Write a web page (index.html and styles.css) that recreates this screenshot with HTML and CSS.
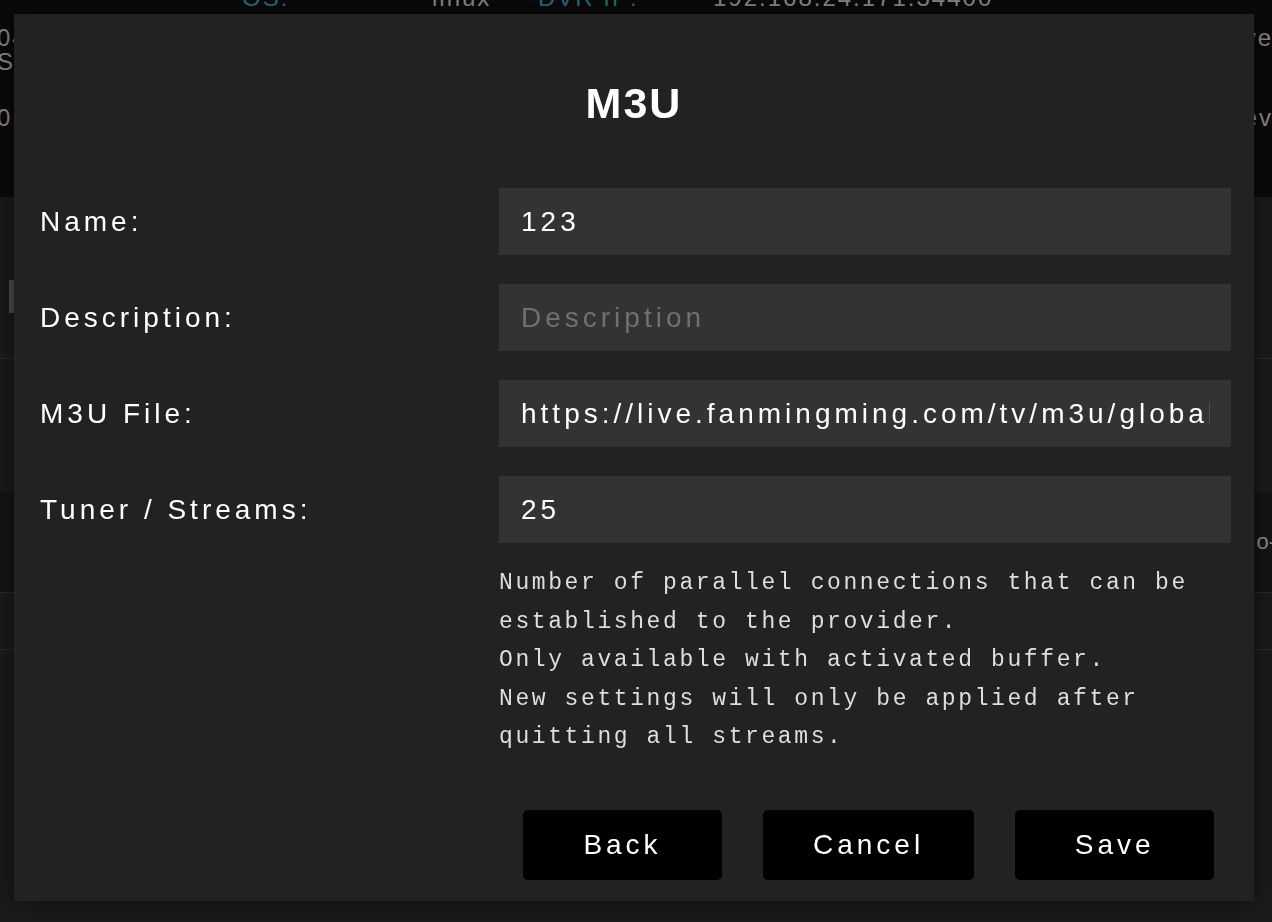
FILE: index.html
```html
<!DOCTYPE html>
<html lang="en">
<head>
<meta charset="utf-8">
<title>M3U</title>
<link rel="stylesheet" href="styles.css">
</head>
<body>
<div class="page">
  <header class="topbar">
    <div class="sysinfo">
      <span class="key">OS:</span>
      <span class="val">linux</span>
      <span class="key">DVR IP:</span>
      <span class="val">192.168.24.171:34400</span>
    </div>
    <div class="edge-row first">
      <div class="edge-left">04 Build<br>Streams</div>
      <div class="edge-right">Active</div>
    </div>
    <div class="edge-row second">
      <div class="edge-left">0 Build</div>
      <div class="edge-right">Lev</div>
    </div>
  </header>
  <section class="list">
    <div class="row row-a"><div class="thumb"></div></div>
    <div class="row row-b"></div>
    <div class="row row-c"><span class="dash">o-</span></div>
    <div class="row row-d"></div>
  </section>
</div>

<div class="modal">
  <h1 class="title">M3U</h1>
  <div class="form">
    <label class="label" for="name">Name:</label>
    <input class="field" id="name" type="text" value="123">
    <label class="label" for="desc">Description:</label>
    <input class="field" id="desc" type="text" placeholder="Description">
    <label class="label" for="file">M3U File:</label>
    <input class="field" id="file" type="text" value="https://live.fanmingming.com/tv/m3u/global.m3u">
    <label class="label" for="tuner">Tuner / Streams:</label>
    <input class="field" id="tuner" type="text" value="25">
  </div>
  <div class="foot">
    <p class="help">Number of parallel connections that can be established to the provider.<br>Only available with activated buffer.<br>New settings will only be applied after quitting all streams.</p>
    <div class="buttons">
      <button class="btn" type="button">Back</button>
      <button class="btn" type="button">Cancel</button>
      <button class="btn" type="button">Save</button>
    </div>
  </div>
</div>
</body>
</html>
```
FILE: styles.css
```css
html, body {
  margin: 0;
  padding: 0;
}
body {
  width: 1272px;
  height: 922px;
  overflow: hidden;
  background: #1b1b1b;
  font-family: "Liberation Sans", Arial, sans-serif;
}

/* background page */
.topbar {
  height: 197px;
  overflow: hidden;
  background: #0a0a0a;
  color: #8c8c8c;
  font-size: 24px;
  letter-spacing: 2px;
  line-height: 24px;
}
.sysinfo {
  display: grid;
  grid-template-columns: 190px 106px 175px auto;
  padding-left: 242px;
  margin-top: -14px;
}
.key {
  color: #2b6d7c;
}
.edge-row {
  display: flex;
  justify-content: space-between;
}
.edge-row.first {
  margin-top: 16px;
}
.edge-row.second {
  margin-top: 32px;
}
.edge-left {
  margin-left: -3px;
}
.edge-right {
  margin-right: -1px;
}

.list .row {
  box-sizing: border-box;
}
.row-a {
  height: 162px;
  padding: 83px 0 0 9px;
  border-bottom: 1px solid #2b2b2b;
}
.thumb {
  width: 5px;
  height: 33px;
  background: #4d4d4d;
}
.row-b {
  height: 133px;
}
.row-c {
  height: 101px;
  background: #151515;
  border-bottom: 1px solid #2b2b2b;
  display: flex;
  justify-content: flex-end;
  align-items: center;
  color: #8c8c8c;
  font-size: 22px;
}
.dash {
  margin-right: -4px;
}
.row-d {
  height: 57px;
  border-bottom: 1px solid #2b2b2b;
}

/* modal */
.modal {
  position: fixed;
  top: 14px;
  left: 14px;
  width: 1240px;
  height: 887px;
  box-sizing: border-box;
  padding: 68px 23px 0 26px;
  background: #222222;
  box-shadow: 0 0 24px rgba(0, 0, 0, 0.55);
  color: #ffffff;
}
.title {
  margin: 0 0 63px;
  text-align: center;
  font-size: 43px;
  line-height: 43px;
  font-weight: bold;
  letter-spacing: 2px;
  padding-right: 3px;
}
.form {
  display: grid;
  grid-template-columns: 459px 732px;
  row-gap: 29px;
  align-items: center;
}
.label {
  font-size: 28px;
  letter-spacing: 4px;
  color: #ffffff;
}
.field {
  box-sizing: border-box;
  width: 732px;
  height: 67px;
  margin: 0;
  padding: 0 21px 0 22px;
  border: none;
  border-radius: 0;
  outline: none;
  background: #333333;
  color: #ffffff;
  font-family: "Liberation Sans", Arial, sans-serif;
  font-size: 28px;
  letter-spacing: 4px;
}
.field::placeholder {
  color: #707070;
  opacity: 1;
}
.foot {
  margin-left: 459px;
  width: 732px;
}
.help {
  margin: 21px 0 0;
  font-family: "Liberation Mono", "Courier New", monospace;
  font-size: 23px;
  letter-spacing: 2.6px;
  line-height: 38.5px;
  color: #dedede;
}
.buttons {
  display: flex;
  gap: 41px;
  margin-top: 53px;
  padding-left: 24px;
}
.btn {
  box-sizing: border-box;
  min-width: 199px;
  height: 70px;
  padding: 0 50px;
  border: none;
  border-radius: 5px;
  background: #000000;
  color: #ffffff;
  font-family: "Liberation Sans", Arial, sans-serif;
  font-size: 28px;
  letter-spacing: 4px;
}
```
